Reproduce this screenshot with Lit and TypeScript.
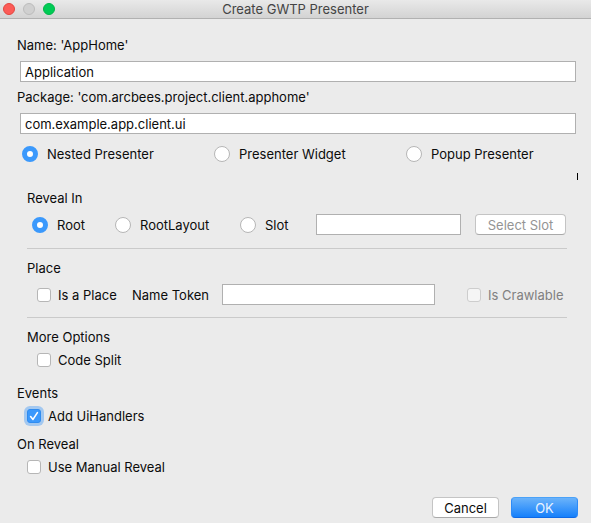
import { LitElement, html, css, nothing } from "lit";
import { customElement } from "lit/decorators.js";

@customElement("app-root")
export class AppRoot extends LitElement {
  static styles = css`
    :host {
      display: block;
      min-height: 100vh;
      background: #ebebeb;
      color: #0c0c0c;
      font: 13px/16px Inter, "Liberation Sans", sans-serif;
    }
    * {
      box-sizing: border-box;
    }
    .titlebar {
      display: grid;
      grid-template-columns: 1fr auto 1fr;
      align-items: center;
      height: 19px;
      padding: 0 3px;
      background: linear-gradient(#e9e9e9, #d3d3d3);
      border-bottom: 1px solid #b1b1b1;
    }
    .lights {
      display: flex;
      gap: 8px;
    }
    .light {
      width: 12px;
      height: 12px;
      padding: 0;
      border: 1px solid #e2463f;
      border-radius: 50%;
      background: #fc5b57;
    }
    .light.minimize {
      background: #d0d0d0;
      border-color: #bcbcbc;
    }
    .light.zoom {
      background: #00cb55;
      border-color: #00b548;
    }
    .title {
      margin: 0;
      font: inherit;
      line-height: 16px;
      color: #444;
    }
    form {
      padding: 18px 13px 5px 17px;
    }
    fieldset {
      min-width: 0;
      margin: 0;
      padding: 0;
      border: 0;
    }
    legend {
      padding: 0;
    }
    .field {
      display: flex;
      flex-direction: column;
      gap: 8px;
      margin: 0 2px 7px 0;
    }
    .field .text {
      margin-left: 3px;
    }
    .text {
      min-width: 0;
      height: 21px;
      padding: 0 4px;
      border: 1px solid #b0b0b0;
      border-radius: 0;
      outline: none;
      background: #fff;
      color: inherit;
      font: inherit;
    }
    .choice {
      display: flex;
      align-items: center;
      gap: 7px;
      white-space: nowrap;
    }
    .choice.off {
      color: #808080;
    }
    .choice input {
      appearance: none;
      flex: none;
      margin: 0;
      width: 14px;
      height: 14px;
      border: 1px solid #b6b6b6;
      border-radius: 3px;
      background: #fff;
      outline: none;
    }
    .choice input:disabled {
      background: #f5f5f5;
      border-color: #cdcdcd;
    }
    .choice.radio {
      gap: 9px;
    }
    .choice.radio input {
      width: 16px;
      height: 16px;
      border-radius: 50%;
    }
    .choice.radio input:checked {
      border: 5px solid #3b99fc;
    }
    .tick {
      display: grid;
      flex: none;
    }
    .tick > * {
      grid-area: 1 / 1;
    }
    .tick svg {
      width: 14px;
      height: 14px;
      pointer-events: none;
      visibility: hidden;
    }
    .tick input:checked {
      background: #3b99fc;
      border-color: #2f8cf0;
      box-shadow: 0 0 0 3px #a3c8f0;
    }
    .tick input:checked + svg {
      visibility: visible;
    }
    .kinds {
      display: grid;
      grid-template-columns: 192fr 192fr 170fr;
      margin: 12px 2px 0 5px;
    }
    .caret {
      width: 1px;
      height: 7px;
      margin: 11px 0 10px auto;
      background: #000;
    }
    .panel {
      margin: 0 11px 0 10px;
    }
    .row {
      display: grid;
      align-items: center;
      margin-top: 8px;
    }
    .row.reveal {
      grid-template-columns: 83px 125px 76px 1fr 91px;
      padding: 0 1px 1px 5px;
    }
    .row.reveal .text {
      margin-right: 14px;
    }
    .row.place {
      grid-template-columns: 95px 90px 1fr 100px;
      padding-left: 10px;
    }
    .row.place .text {
      margin-right: 32px;
    }
    .row.single {
      margin-top: 7px;
      padding-left: 10px;
    }
    hr {
      height: 1px;
      margin: 12px 0 11px;
      border: 0;
      background: #cacaca;
    }
    .events {
      margin-top: 17px;
    }
    .manual {
      margin-top: 12px;
    }
    .actions {
      display: flex;
      justify-content: flex-end;
      gap: 12px;
      margin-top: 22px;
    }
    .button {
      height: 21px;
      padding: 0;
      border: 1px solid #c4c4c4;
      border-bottom-color: #a9a9a9;
      border-radius: 4px;
      background: #fff;
      color: #0c0c0c;
      font: inherit;
      white-space: nowrap;
    }
    .button:disabled {
      color: #949494;
    }
    .actions .button {
      width: 67px;
    }
    .button.primary {
      border-color: #4ba2f8 #2d8bf8 #0e69e6;
      background: linear-gradient(#6bb3fa, #1580fb);
      color: #e9f3ff;
    }
  `;

  private radio(group: string, label: string, checked = false) {
    return html`<label class="choice radio"
      ><input type="radio" name=${group} ?checked=${checked} />${label}</label
    >`;
  }

  private check(label: string, checked = false, disabled = false) {
    return html`<label class="choice ${disabled ? "off" : ""}"
      ><span class="tick"
        ><input type="checkbox" ?checked=${checked} ?disabled=${disabled} />${disabled
          ? nothing
          : html`<svg viewBox="0 0 14 14" aria-hidden="true">
              <path
                d="M3.6 7.6 6 10.4 10.4 3.6"
                fill="none"
                stroke="#fff"
                stroke-width="1.6"
                stroke-linecap="round"
                stroke-linejoin="round"
              />
            </svg>`}</span
      >${label}</label
    >`;
  }

  render() {
    return html`
      <header class="titlebar">
        <div class="lights">
          <button class="light" aria-label="Close"></button>
          <button class="light minimize" aria-label="Minimize" disabled></button>
          <button class="light zoom" aria-label="Zoom"></button>
        </div>
        <h1 class="title">Create GWTP Presenter</h1>
      </header>
      <form @submit=${(e: Event) => e.preventDefault()}>
        <div class="field">
          <label for="name">Name: 'AppHome'</label>
          <input class="text" id="name" type="text" value="Application" />
        </div>
        <div class="field">
          <label for="package">Package: 'com.arcbees.project.client.apphome'</label>
          <input class="text" id="package" type="text" value="com.example.app.client.ui" />
        </div>
        <div class="kinds" role="radiogroup" aria-label="Presenter type">
          ${this.radio("kind", "Nested Presenter", true)}
          ${this.radio("kind", "Presenter Widget")}
          ${this.radio("kind", "Popup Presenter")}
        </div>
        <div class="caret"></div>
        <div class="panel">
          <fieldset>
            <legend>Reveal In</legend>
            <div class="row reveal">
              ${this.radio("reveal", "Root", true)}
              ${this.radio("reveal", "RootLayout")}
              ${this.radio("reveal", "Slot")}
              <input class="text" type="text" aria-label="Slot" />
              <button class="button" type="button" disabled>Select Slot</button>
            </div>
          </fieldset>
          <hr />
          <fieldset>
            <legend>Place</legend>
            <div class="row place">
              ${this.check("Is a Place")}
              <label for="token">Name Token</label>
              <input class="text" id="token" type="text" />
              ${this.check("Is Crawlable", false, true)}
            </div>
          </fieldset>
          <hr />
          <fieldset>
            <legend>More Options</legend>
            <div class="row single">${this.check("Code Split")}</div>
          </fieldset>
        </div>
        <fieldset class="events">
          <legend>Events</legend>
          <div class="row single">${this.check("Add UiHandlers", true)}</div>
        </fieldset>
        <fieldset class="manual">
          <legend>On Reveal</legend>
          <div class="row single">${this.check("Use Manual Reveal")}</div>
        </fieldset>
        <div class="actions">
          <button class="button" type="button">Cancel</button>
          <button class="button primary" type="submit">OK</button>
        </div>
      </form>
    `;
  }
}
